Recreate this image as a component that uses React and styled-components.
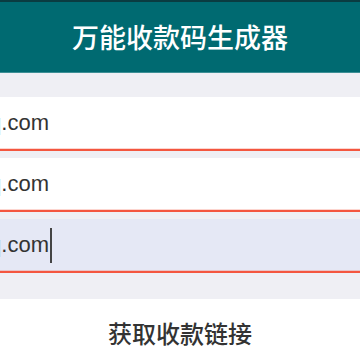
import React from "react";
import styled, { createGlobalStyle } from "styled-components";

const Global = createGlobalStyle`
  html, body { margin: 0; padding: 0; background: #ffffff; }
  body { font-family: "Liberation Sans", "Noto Sans CJK SC", sans-serif; }
  * { box-sizing: border-box; }
`;

const Page = styled.div`
  width: 360px;
  height: 360px;
  display: flex;
  flex-direction: column;
  background: #ffffff;
  overflow: hidden;
`;

const Header = styled.header`
  height: 73px;
  flex: none;
  display: flex;
  align-items: center;
  justify-content: center;
  background: #006a71;
  border-top: 2px solid #0a3c41;
  border-bottom: 1px solid #3d8f95;
  color: #ffffff;
  font-family: "Noto Sans CJK SC", sans-serif;
  font-size: 27px;
  font-weight: 500;
  padding-bottom: 1px;
`;

const Form = styled.section`
  flex: none;
  display: flex;
  flex-direction: column;
  gap: 7px;
  padding: 24px 0 26px;
  background: #efeff4;
`;

const Field = styled.div`
  height: 54px;
  display: flex;
  align-items: center;
  background: ${(p) => (p.$focused ? "#e5e8f5" : "#ffffff")};
  border-bottom: 2px solid #f4563f;
  box-shadow: 0 -1px 0 rgba(244, 86, 63, 0.25) inset;
`;

const ValueClip = styled.div`
  width: ${(p) => (p.$focused ? "52px" : "49px")};
  flex: none;
  display: flex;
  align-items: center;
  justify-content: flex-end;
  overflow: hidden;
  white-space: nowrap;
  font-family: "Liberation Sans", Arial, sans-serif;
  font-size: 22px;
  color: #333333;
`;

const Caret = styled.span`
  flex: none;
  width: 2px;
  height: 35px;
  margin-left: 1px;
  background: #444444;
`;

const Footer = styled.div`
  flex: 1;
  display: flex;
  align-items: center;
  justify-content: center;
  background: #ffffff;
  padding-top: 6px;
`;

const LinkButton = styled.button`
  border: none;
  background: none;
  padding: 0;
  color: #333333;
  font-family: "Noto Sans CJK SC", sans-serif;
  font-size: 24px;
  font-weight: 500;
  cursor: pointer;
`;

const fields = [
  { value: "1234567890@qq.com", focused: false },
  { value: "1234567890@qq.com", focused: false },
  { value: "1234567890@qq.com", focused: true },
];

export default function App() {
  return (
    <Page>
      <Global />
      <Header>万能收款码生成器</Header>
      <Form>
        {fields.map((f, i) => (
          <Field key={i} $focused={f.focused}>
            <ValueClip $focused={f.focused}>
              {f.value}
              {f.focused && <Caret />}
            </ValueClip>
          </Field>
        ))}
      </Form>
      <Footer>
        <LinkButton>获取收款链接</LinkButton>
      </Footer>
    </Page>
  );
}
